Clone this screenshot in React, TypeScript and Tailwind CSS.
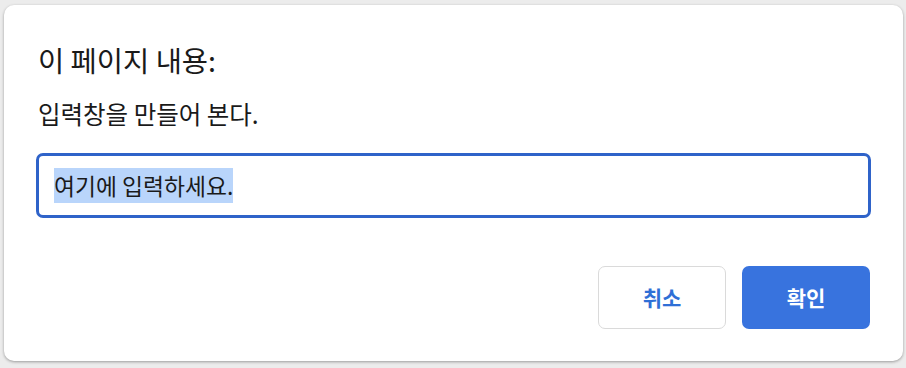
export default function App() {
  const font = { fontFamily: '"Noto Sans CJK KR", "Noto Sans", sans-serif' };
  return (
    <div className="w-[906px] h-[368px] bg-[#ececec] pt-[5px] pl-[4px]" style={font}>
      <div className="w-[899px] h-[356px] bg-white rounded-[10px] shadow-[0_1px_3px_rgba(0,0,0,0.35)] px-[32px] flex flex-col">
        <div className="mt-[38px] ml-[2px] text-[28.5px] leading-[34px] text-[#1a1a1a]">이 페이지 내용:</div>
        <div className="mt-[22px] ml-[2px] text-[24.5px] leading-[30px] text-[#1a1a1a]">입력창을 만들어 본다.</div>
        <div className="mt-[24px] h-[65px] border-[3px] border-[#2f63c9] rounded-[7px] flex items-center pl-[15px]">
          <span className="bg-[#b9d5fb] text-[22.8px] leading-[35px] text-[#1a1a1a]">여기에 입력하세요.</span>
        </div>
        <div className="mt-[48px] flex justify-end gap-[16px] pr-[1px]">
          <div className="w-[128px] h-[63px] rounded-[7px] border border-[#dadada] bg-white flex items-center justify-center text-[21px] font-bold text-[#2f6fd6]">취소</div>
          <div className="w-[128px] h-[63px] rounded-[7px] bg-[#3873de] flex items-center justify-center text-[21px] font-bold text-white">확인</div>
        </div>
      </div>
    </div>
  );
}
